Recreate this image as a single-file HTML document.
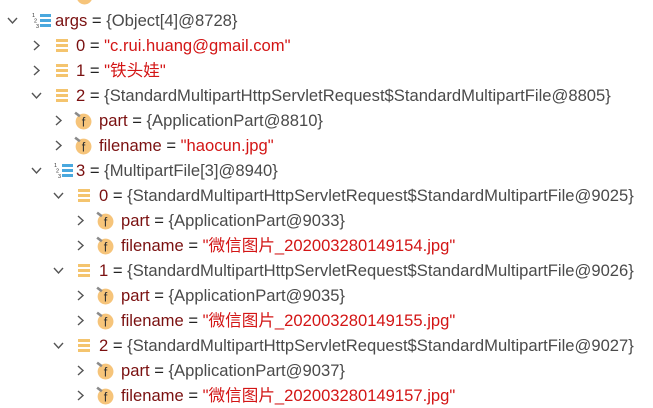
<!DOCTYPE html>
<html><head><meta charset="utf-8"><style>
body{margin:0;width:653px;height:404px;background:#fff;overflow:hidden;position:relative;font-family:"Liberation Sans","Noto Sans CJK SC",sans-serif;font-size:16.6px}
.r{position:absolute;height:25px;line-height:25px;white-space:nowrap;left:0}
.c{position:absolute;top:7px}
.t{position:absolute;top:0}
.n{color:#7a1010}.e{color:#222}.g{color:#4a4a4a}.s{color:#d31515}
.li{position:absolute;top:6px;width:12px;height:13px}
.li i{display:block;height:3px;background:#f4c46e;margin-bottom:2px}
.fi{position:absolute;top:3px}
.ar{position:absolute;top:4px}
</style></head><body>
<div class="r" style="top:-17px"><svg class="fi" style="left:74px" width="19" height="19" viewBox="0 0 18 18"><circle cx="10" cy="10" r="7.5" fill="#f6c47a"/></svg></div>

<div class="r" style="top:8px"><svg class="c" style="left:7px" width="11" height="11" viewBox="0 0 11 11"><path d="M1 3l4.5 5L10 3" fill="none" stroke="#555" stroke-width="1.4"/></svg><svg class="ar" style="left:32px" width="20" height="17" viewBox="0 0 20 17"><text x="0" y="5" font-size="5.5" fill="#333">1</text><text x="2" y="10.5" font-size="5.5" fill="#333">2</text><text x="4" y="16" font-size="5.5" fill="#333">3</text><rect x="8" y="2" width="11" height="3" fill="#4aa8de"/><rect x="8" y="7" width="11" height="3" fill="#4aa8de"/><rect x="8" y="12" width="11" height="3" fill="#4aa8de"/></svg><span class="t" style="left:55px"><span class="n">args</span><span class="e"> = </span><span class="g">{Object[4]@8728}</span></span></div>

<div class="r" style="top:33px"><svg class="c" style="left:31px" width="11" height="11" viewBox="0 0 11 11"><path d="M3 1l5 4.5L3 10" fill="none" stroke="#555" stroke-width="1.4"/></svg><div class="li" style="left:56px"><i></i><i></i><i></i></div><span class="t" style="left:76px"><span class="n">0</span><span class="e"> = </span><span class="s">"c.rui.huang@gmail.com"</span></span></div>

<div class="r" style="top:58px"><svg class="c" style="left:31px" width="11" height="11" viewBox="0 0 11 11"><path d="M3 1l5 4.5L3 10" fill="none" stroke="#555" stroke-width="1.4"/></svg><div class="li" style="left:56px"><i></i><i></i><i></i></div><span class="t" style="left:76px"><span class="n">1</span><span class="e"> = </span><span class="s">"铁头娃"</span></span></div>

<div class="r" style="top:83px"><svg class="c" style="left:31px" width="11" height="11" viewBox="0 0 11 11"><path d="M1 3l4.5 5L10 3" fill="none" stroke="#555" stroke-width="1.4"/></svg><div class="li" style="left:56px"><i></i><i></i><i></i></div><span class="t" style="left:76px"><span class="n">2</span><span class="e"> = </span><span class="g">{StandardMultipartHttpServletRequest$StandardMultipartFile@8805}</span></span></div>

<div class="r" style="top:108px"><svg class="c" style="left:53px" width="11" height="11" viewBox="0 0 11 11"><path d="M3 1l5 4.5L3 10" fill="none" stroke="#555" stroke-width="1.4"/></svg><svg class="fi" style="left:73px" width="19" height="19" viewBox="0 0 18 18"><circle cx="10" cy="10" r="7.5" fill="#f6c47a"/><path d="M2 1.5l4.5 3.5" stroke="#8a8a8a" stroke-width="2.4"/><text x="10" y="14.5" font-size="12" text-anchor="middle" fill="#333" font-family="Liberation Sans">f</text></svg><span class="t" style="left:99px"><span class="n">part</span><span class="e"> = </span><span class="g">{ApplicationPart@8810}</span></span></div>

<div class="r" style="top:133px"><svg class="c" style="left:53px" width="11" height="11" viewBox="0 0 11 11"><path d="M3 1l5 4.5L3 10" fill="none" stroke="#555" stroke-width="1.4"/></svg><svg class="fi" style="left:73px" width="19" height="19" viewBox="0 0 18 18"><circle cx="10" cy="10" r="7.5" fill="#f6c47a"/><path d="M2 1.5l4.5 3.5" stroke="#8a8a8a" stroke-width="2.4"/><text x="10" y="14.5" font-size="12" text-anchor="middle" fill="#333" font-family="Liberation Sans">f</text></svg><span class="t" style="left:99px"><span class="n">filename</span><span class="e"> = </span><span class="s">"haocun.jpg"</span></span></div>

<div class="r" style="top:158px"><svg class="c" style="left:31px" width="11" height="11" viewBox="0 0 11 11"><path d="M1 3l4.5 5L10 3" fill="none" stroke="#555" stroke-width="1.4"/></svg><svg class="ar" style="left:54px" width="20" height="17" viewBox="0 0 20 17"><text x="0" y="5" font-size="5.5" fill="#333">1</text><text x="2" y="10.5" font-size="5.5" fill="#333">2</text><text x="4" y="16" font-size="5.5" fill="#333">3</text><rect x="8" y="2" width="11" height="3" fill="#4aa8de"/><rect x="8" y="7" width="11" height="3" fill="#4aa8de"/><rect x="8" y="12" width="11" height="3" fill="#4aa8de"/></svg><span class="t" style="left:76px"><span class="n">3</span><span class="e"> = </span><span class="g">{MultipartFile[3]@8940}</span></span></div>

<div class="r" style="top:183px"><svg class="c" style="left:53px" width="11" height="11" viewBox="0 0 11 11"><path d="M1 3l4.5 5L10 3" fill="none" stroke="#555" stroke-width="1.4"/></svg><div class="li" style="left:78px"><i></i><i></i><i></i></div><span class="t" style="left:99px"><span class="n">0</span><span class="e"> = </span><span class="g">{StandardMultipartHttpServletRequest$StandardMultipartFile@9025}</span></span></div>
<div class="r" style="top:208px"><svg class="c" style="left:75px" width="11" height="11" viewBox="0 0 11 11"><path d="M3 1l5 4.5L3 10" fill="none" stroke="#555" stroke-width="1.4"/></svg><svg class="fi" style="left:95px" width="19" height="19" viewBox="0 0 18 18"><circle cx="10" cy="10" r="7.5" fill="#f6c47a"/><path d="M2 1.5l4.5 3.5" stroke="#8a8a8a" stroke-width="2.4"/><text x="10" y="14.5" font-size="12" text-anchor="middle" fill="#333" font-family="Liberation Sans">f</text></svg><span class="t" style="left:121px"><span class="n">part</span><span class="e"> = </span><span class="g">{ApplicationPart@9033}</span></span></div>
<div class="r" style="top:233px"><svg class="c" style="left:75px" width="11" height="11" viewBox="0 0 11 11"><path d="M3 1l5 4.5L3 10" fill="none" stroke="#555" stroke-width="1.4"/></svg><svg class="fi" style="left:95px" width="19" height="19" viewBox="0 0 18 18"><circle cx="10" cy="10" r="7.5" fill="#f6c47a"/><path d="M2 1.5l4.5 3.5" stroke="#8a8a8a" stroke-width="2.4"/><text x="10" y="14.5" font-size="12" text-anchor="middle" fill="#333" font-family="Liberation Sans">f</text></svg><span class="t" style="left:121px"><span class="n">filename</span><span class="e"> = </span><span class="s">"微信图片_202003280149154.jpg"</span></span></div>

<div class="r" style="top:258px"><svg class="c" style="left:53px" width="11" height="11" viewBox="0 0 11 11"><path d="M1 3l4.5 5L10 3" fill="none" stroke="#555" stroke-width="1.4"/></svg><div class="li" style="left:78px"><i></i><i></i><i></i></div><span class="t" style="left:99px"><span class="n">1</span><span class="e"> = </span><span class="g">{StandardMultipartHttpServletRequest$StandardMultipartFile@9026}</span></span></div>
<div class="r" style="top:283px"><svg class="c" style="left:75px" width="11" height="11" viewBox="0 0 11 11"><path d="M3 1l5 4.5L3 10" fill="none" stroke="#555" stroke-width="1.4"/></svg><svg class="fi" style="left:95px" width="19" height="19" viewBox="0 0 18 18"><circle cx="10" cy="10" r="7.5" fill="#f6c47a"/><path d="M2 1.5l4.5 3.5" stroke="#8a8a8a" stroke-width="2.4"/><text x="10" y="14.5" font-size="12" text-anchor="middle" fill="#333" font-family="Liberation Sans">f</text></svg><span class="t" style="left:121px"><span class="n">part</span><span class="e"> = </span><span class="g">{ApplicationPart@9035}</span></span></div>
<div class="r" style="top:308px"><svg class="c" style="left:75px" width="11" height="11" viewBox="0 0 11 11"><path d="M3 1l5 4.5L3 10" fill="none" stroke="#555" stroke-width="1.4"/></svg><svg class="fi" style="left:95px" width="19" height="19" viewBox="0 0 18 18"><circle cx="10" cy="10" r="7.5" fill="#f6c47a"/><path d="M2 1.5l4.5 3.5" stroke="#8a8a8a" stroke-width="2.4"/><text x="10" y="14.5" font-size="12" text-anchor="middle" fill="#333" font-family="Liberation Sans">f</text></svg><span class="t" style="left:121px"><span class="n">filename</span><span class="e"> = </span><span class="s">"微信图片_202003280149155.jpg"</span></span></div>

<div class="r" style="top:333px"><svg class="c" style="left:53px" width="11" height="11" viewBox="0 0 11 11"><path d="M1 3l4.5 5L10 3" fill="none" stroke="#555" stroke-width="1.4"/></svg><div class="li" style="left:78px"><i></i><i></i><i></i></div><span class="t" style="left:99px"><span class="n">2</span><span class="e"> = </span><span class="g">{StandardMultipartHttpServletRequest$StandardMultipartFile@9027}</span></span></div>
<div class="r" style="top:358px"><svg class="c" style="left:75px" width="11" height="11" viewBox="0 0 11 11"><path d="M3 1l5 4.5L3 10" fill="none" stroke="#555" stroke-width="1.4"/></svg><svg class="fi" style="left:95px" width="19" height="19" viewBox="0 0 18 18"><circle cx="10" cy="10" r="7.5" fill="#f6c47a"/><path d="M2 1.5l4.5 3.5" stroke="#8a8a8a" stroke-width="2.4"/><text x="10" y="14.5" font-size="12" text-anchor="middle" fill="#333" font-family="Liberation Sans">f</text></svg><span class="t" style="left:121px"><span class="n">part</span><span class="e"> = </span><span class="g">{ApplicationPart@9037}</span></span></div>
<div class="r" style="top:383px"><svg class="c" style="left:75px" width="11" height="11" viewBox="0 0 11 11"><path d="M3 1l5 4.5L3 10" fill="none" stroke="#555" stroke-width="1.4"/></svg><svg class="fi" style="left:95px" width="19" height="19" viewBox="0 0 18 18"><circle cx="10" cy="10" r="7.5" fill="#f6c47a"/><path d="M2 1.5l4.5 3.5" stroke="#8a8a8a" stroke-width="2.4"/><text x="10" y="14.5" font-size="12" text-anchor="middle" fill="#333" font-family="Liberation Sans">f</text></svg><span class="t" style="left:121px"><span class="n">filename</span><span class="e"> = </span><span class="s">"微信图片_202003280149157.jpg"</span></span></div>
</body></html>
